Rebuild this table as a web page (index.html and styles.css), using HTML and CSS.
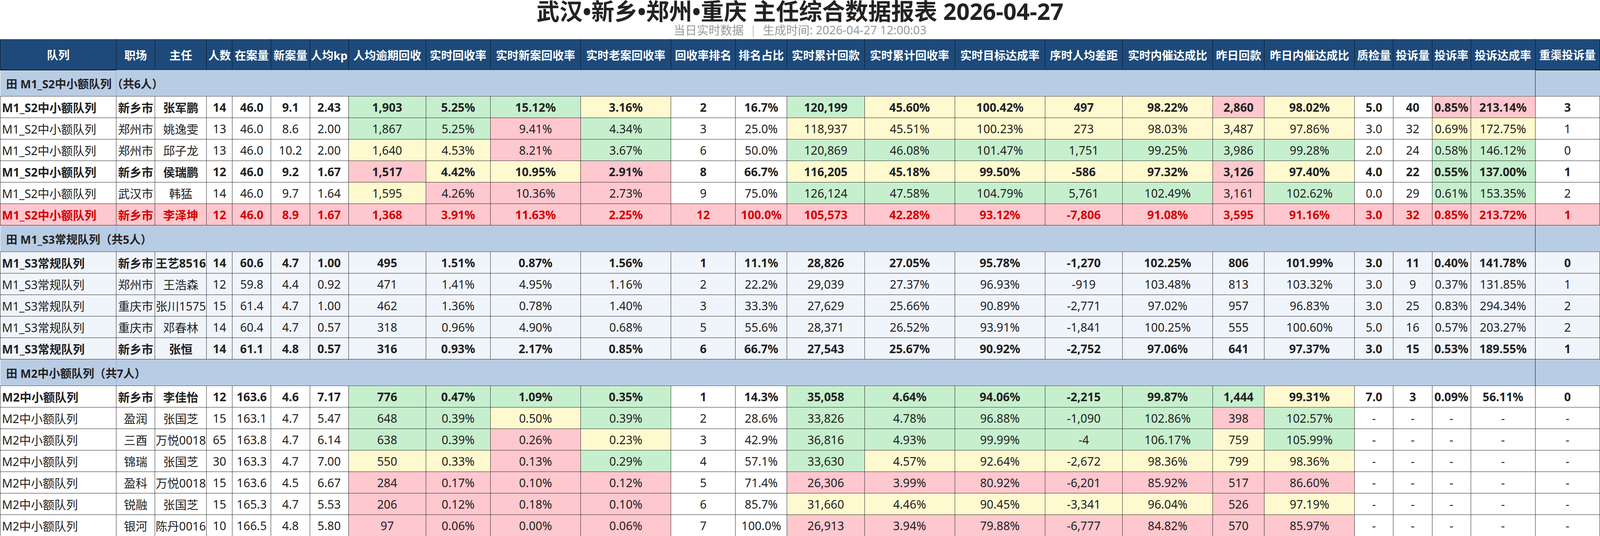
FILE: index.html
```html
<!DOCTYPE html>
<html lang="zh-CN">
<head>
<meta charset="utf-8">
<title>主任综合数据报表</title>
<link rel="stylesheet" href="styles.css">
</head>
<body>
<header class="head">
  <h1 class="title">武汉•新乡•郑州•重庆 主任综合数据报表 2026-04-27</h1>
  <div class="sub">当日实时数据<span class="sep">|</span>生成时间: 2026-04-27 12:00:03</div>
</header>
<table class="report">
  <colgroup>
    <col class="u9"><col class="u3"><col class="u4"><col class="u2"><col class="u3"><col class="u3"><col class="u3"><col class="u6"><col class="u5"><col class="u7"><col class="u7"><col class="u5"><col class="u4"><col class="u6"><col class="u7"><col class="u7"><col class="u6"><col class="u7"><col class="u4"><col class="u7"><col class="u3"><col class="u3"><col class="u3"><col class="u5"><col class="u5">
  </colgroup>
  <thead>
    <tr>
      <th class="sticky">队列</th><th>职场</th><th>主任</th><th>人数</th><th>在案量</th><th>新案量</th><th>人均kp</th><th>人均逾期回收</th><th>实时回收率</th><th>实时新案回收率</th><th>实时老案回收率</th><th>回收率排名</th><th>排名占比</th><th>实时累计回款</th><th>实时累计回收率</th><th>实时目标达成率</th><th>序时人均差距</th><th>实时内催达成比</th><th>昨日回款</th><th>昨日内催达成比</th><th>质检量</th><th>投诉量</th><th>投诉率</th><th>投诉达成率</th><th class="sticky">重渠投诉量</th>
    </tr>
  </thead>
  <tbody>
    <tr class="grp"><td class="gname">田 M1_S2中小额队列（共6人）</td><td colspan="23"></td><td class="glast"></td></tr>
    <tr class="b"><td class="q">M1_S2中小额队列</td><td>新乡市</td><td>张军鹏</td><td>14</td><td>46.0</td><td>9.1</td><td>2.43</td><td class="g">1,903</td><td class="g">5.25%</td><td class="g">15.12%</td><td class="y">3.16%</td><td>2</td><td>16.7%</td><td class="g">120,199</td><td class="y">45.60%</td><td class="y">100.42%</td><td class="y">497</td><td class="y">98.22%</td><td class="p">2,860</td><td class="y">98.02%</td><td>5.0</td><td>40</td><td class="p">0.85%</td><td class="p">213.14%</td><td>3</td></tr>
    <tr><td class="q">M1_S2中小额队列</td><td>郑州市</td><td>姚逸雯</td><td>13</td><td>46.0</td><td>8.6</td><td>2.00</td><td class="g">1,867</td><td class="g">5.25%</td><td class="p">9.41%</td><td class="g">4.34%</td><td>3</td><td>25.0%</td><td class="y">118,937</td><td class="y">45.51%</td><td class="y">100.23%</td><td class="y">273</td><td class="y">98.03%</td><td class="y">3,487</td><td class="y">97.86%</td><td>3.0</td><td>32</td><td class="y">0.69%</td><td class="y">172.75%</td><td>1</td></tr>
    <tr><td class="q">M1_S2中小额队列</td><td>郑州市</td><td>邱子龙</td><td>13</td><td>46.0</td><td>10.2</td><td>2.00</td><td class="y">1,640</td><td class="y">4.53%</td><td class="p">8.21%</td><td class="g">3.67%</td><td>6</td><td>50.0%</td><td class="g">120,869</td><td class="g">46.08%</td><td class="g">101.47%</td><td class="g">1,751</td><td class="g">99.25%</td><td class="g">3,986</td><td class="g">99.28%</td><td>2.0</td><td>24</td><td class="g">0.58%</td><td class="g">146.12%</td><td>0</td></tr>
    <tr class="b"><td class="q">M1_S2中小额队列</td><td>新乡市</td><td>侯瑞鹏</td><td>12</td><td>46.0</td><td>9.2</td><td>1.67</td><td class="p">1,517</td><td class="y">4.42%</td><td class="y">10.95%</td><td class="p">2.91%</td><td>8</td><td>66.7%</td><td class="y">116,205</td><td class="y">45.18%</td><td class="y">99.50%</td><td class="y">-586</td><td class="y">97.32%</td><td class="p">3,126</td><td class="y">97.40%</td><td>4.0</td><td>22</td><td class="g">0.55%</td><td class="g">137.00%</td><td>1</td></tr>
    <tr><td class="q">M1_S2中小额队列</td><td>武汉市</td><td>韩猛</td><td>14</td><td>46.0</td><td>9.7</td><td>1.64</td><td class="y">1,595</td><td class="p">4.26%</td><td class="p">10.36%</td><td class="p">2.73%</td><td>9</td><td>75.0%</td><td class="g">126,124</td><td class="g">47.58%</td><td class="g">104.79%</td><td class="g">5,761</td><td class="g">102.49%</td><td class="p">3,161</td><td class="g">102.62%</td><td>0.0</td><td>29</td><td class="g">0.61%</td><td class="g">153.35%</td><td>2</td></tr>
    <tr class="alert"><td class="q">M1_S2中小额队列</td><td>新乡市</td><td>李泽坤</td><td>12</td><td>46.0</td><td>8.9</td><td>1.67</td><td>1,368</td><td>3.91%</td><td>11.63%</td><td>2.25%</td><td>12</td><td>100.0%</td><td>105,573</td><td>42.28%</td><td>93.12%</td><td>-7,806</td><td>91.08%</td><td>3,595</td><td>91.16%</td><td>3.0</td><td>32</td><td>0.85%</td><td>213.72%</td><td>1</td></tr>

    <tr class="grp"><td class="gname">田 M1_S3常规队列（共5人）</td><td colspan="23"></td><td class="glast"></td></tr>
    <tr class="alt b"><td class="q">M1_S3常规队列</td><td>新乡市</td><td>王艺8516</td><td>14</td><td>60.6</td><td>4.7</td><td>1.00</td><td class="g">495</td><td class="g">1.51%</td><td class="p">0.87%</td><td class="g">1.56%</td><td>1</td><td>11.1%</td><td class="g">28,826</td><td class="g">27.05%</td><td class="g">95.78%</td><td class="g">-1,270</td><td class="g">102.25%</td><td class="y">806</td><td class="g">101.99%</td><td>3.0</td><td>11</td><td class="g">0.40%</td><td class="g">141.78%</td><td>0</td></tr>
    <tr class="alt"><td class="q">M1_S3常规队列</td><td>郑州市</td><td>王浩森</td><td>12</td><td>59.8</td><td>4.4</td><td>0.92</td><td class="g">471</td><td class="g">1.41%</td><td class="g">4.95%</td><td class="y">1.16%</td><td>2</td><td>22.2%</td><td class="g">29,039</td><td class="g">27.37%</td><td class="g">96.93%</td><td class="g">-919</td><td class="g">103.48%</td><td class="y">813</td><td class="g">103.32%</td><td>3.0</td><td>9</td><td class="g">0.37%</td><td class="g">131.85%</td><td>1</td></tr>
    <tr class="alt"><td class="q">M1_S3常规队列</td><td>重庆市</td><td>张川1575</td><td>15</td><td>61.4</td><td>4.7</td><td>1.00</td><td class="g">462</td><td class="g">1.36%</td><td class="p">0.78%</td><td class="g">1.40%</td><td>3</td><td>33.3%</td><td class="p">27,629</td><td class="p">25.66%</td><td class="p">90.89%</td><td class="p">-2,771</td><td class="p">97.02%</td><td class="g">957</td><td class="p">96.83%</td><td>3.0</td><td>25</td><td class="p">0.83%</td><td class="p">294.34%</td><td>2</td></tr>
    <tr class="alt"><td class="q">M1_S3常规队列</td><td>重庆市</td><td>邓春林</td><td>14</td><td>60.4</td><td>4.7</td><td>0.57</td><td class="p">318</td><td class="p">0.96%</td><td class="g">4.90%</td><td class="p">0.68%</td><td>5</td><td>55.6%</td><td class="y">28,371</td><td class="y">26.52%</td><td class="y">93.91%</td><td class="y">-1,841</td><td class="y">100.25%</td><td class="p">555</td><td class="y">100.60%</td><td>5.0</td><td>16</td><td class="y">0.57%</td><td class="y">203.27%</td><td>2</td></tr>
    <tr class="alt b"><td class="q">M1_S3常规队列</td><td>新乡市</td><td>张恒</td><td>14</td><td>61.1</td><td>4.8</td><td>0.57</td><td class="p">316</td><td class="p">0.93%</td><td class="y">2.17%</td><td class="p">0.85%</td><td>6</td><td>66.7%</td><td class="p">27,543</td><td class="p">25.67%</td><td class="p">90.92%</td><td class="p">-2,752</td><td class="p">97.06%</td><td class="p">641</td><td class="p">97.37%</td><td>3.0</td><td>15</td><td class="y">0.53%</td><td class="y">189.55%</td><td>1</td></tr>

    <tr class="grp"><td class="gname">田 M2中小额队列（共7人）</td><td colspan="23"></td><td class="glast"></td></tr>
    <tr class="b"><td class="q">M2中小额队列</td><td>新乡市</td><td>李佳怡</td><td>12</td><td>163.6</td><td>4.6</td><td>7.17</td><td class="g">776</td><td class="g">0.47%</td><td class="g">1.09%</td><td class="g">0.35%</td><td>1</td><td>14.3%</td><td class="g">35,058</td><td class="g">4.64%</td><td class="g">94.06%</td><td class="g">-2,215</td><td class="g">99.87%</td><td class="g">1,444</td><td class="y">99.31%</td><td>7.0</td><td>3</td><td>0.09%</td><td>56.11%</td><td>0</td></tr>
    <tr><td class="q">M2中小额队列</td><td>盈润</td><td>张国芝</td><td>15</td><td>163.1</td><td>4.7</td><td>5.47</td><td class="g">648</td><td class="g">0.39%</td><td class="y">0.50%</td><td class="g">0.39%</td><td>2</td><td>28.6%</td><td class="g">33,826</td><td class="g">4.78%</td><td class="g">96.88%</td><td class="g">-1,090</td><td class="g">102.86%</td><td class="p">398</td><td class="g">102.57%</td><td>-</td><td>-</td><td>-</td><td>-</td><td>-</td></tr>
    <tr><td class="q">M2中小额队列</td><td>三酉</td><td>万悦0018</td><td>65</td><td>163.8</td><td>4.7</td><td>6.14</td><td class="g">638</td><td class="g">0.39%</td><td class="p">0.26%</td><td class="y">0.23%</td><td>3</td><td>42.9%</td><td class="g">36,816</td><td class="g">4.93%</td><td class="g">99.99%</td><td class="g">-4</td><td class="g">106.17%</td><td class="y">759</td><td class="g">105.99%</td><td>-</td><td>-</td><td>-</td><td>-</td><td>-</td></tr>
    <tr><td class="q">M2中小额队列</td><td>锦瑞</td><td>张国芝</td><td>30</td><td>163.3</td><td>4.7</td><td>7.00</td><td class="y">550</td><td class="y">0.33%</td><td class="p">0.13%</td><td class="g">0.29%</td><td>4</td><td>57.1%</td><td class="g">33,630</td><td class="y">4.57%</td><td class="y">92.64%</td><td class="y">-2,672</td><td class="y">98.36%</td><td class="y">799</td><td class="y">98.36%</td><td>-</td><td>-</td><td>-</td><td>-</td><td>-</td></tr>
    <tr><td class="q">M2中小额队列</td><td>盈科</td><td>万悦0018</td><td>15</td><td>163.6</td><td>4.5</td><td>6.67</td><td class="p">284</td><td class="p">0.17%</td><td class="p">0.10%</td><td class="p">0.12%</td><td>5</td><td>71.4%</td><td class="p">26,306</td><td class="p">3.99%</td><td class="p">80.92%</td><td class="p">-6,201</td><td class="p">85.92%</td><td class="p">517</td><td class="p">86.60%</td><td>-</td><td>-</td><td>-</td><td>-</td><td>-</td></tr>
    <tr><td class="q">M2中小额队列</td><td>锐融</td><td>张国芝</td><td>15</td><td>165.3</td><td>4.7</td><td>5.53</td><td class="p">206</td><td class="p">0.12%</td><td class="p">0.18%</td><td class="p">0.10%</td><td>6</td><td>85.7%</td><td class="y">31,660</td><td class="y">4.46%</td><td class="y">90.45%</td><td class="y">-3,341</td><td class="y">96.04%</td><td class="p">526</td><td class="y">97.19%</td><td>-</td><td>-</td><td>-</td><td>-</td><td>-</td></tr>
    <tr><td class="q">M2中小额队列</td><td>银河</td><td>陈丹0016</td><td>10</td><td>166.5</td><td>4.8</td><td>5.80</td><td class="p">97</td><td class="p">0.06%</td><td class="p">0.00%</td><td class="p">0.06%</td><td>7</td><td>100.0%</td><td class="p">26,913</td><td class="p">3.94%</td><td class="p">79.88%</td><td class="p">-6,777</td><td class="p">84.82%</td><td class="p">570</td><td class="p">85.97%</td><td>-</td><td>-</td><td>-</td><td>-</td><td>-</td></tr>
  </tbody>
</table>
</body>
</html>
```
FILE: styles.css
```css
* { box-sizing: border-box; }
html, body { margin: 0; padding: 0; background: #ffffff; }
body {
  font-family: "Noto Sans", "Noto Sans CJK SC", sans-serif;
  color: #222222;
}

.head {
  height: 100px;
  text-align: center;
}
.title {
  margin: 0;
  font-size: 59px;
  line-height: 56px;
  font-weight: 700;
  color: #222222;
  white-space: nowrap;
}
.sub {
  font-size: 30px;
  line-height: 41px;
  color: #9a9a9a;
  white-space: nowrap;
}
.sub .sep { margin: 0 16px; color: #c4c4c4; }

/* column widths: the sheet is laid out on a 124-unit grid */
.report {
  width: 100%;
  border-collapse: collapse;
  table-layout: fixed;
}
.report col.u2 { width: 1.6129%; }
.report col.u3 { width: 2.4194%; }
.report col.u4 { width: 3.2258%; }
.report col.u5 { width: 4.0323%; }
.report col.u6 { width: 4.8387%; }
.report col.u7 { width: 5.6452%; }
.report col.u9 { width: 7.2581%; }

.report thead tr { height: 78px; }
.report th {
  padding: 0;
  background: #1d4a7a;
  color: #ffffff;
  font-size: 29px;
  font-weight: 700;
  text-align: center;
  white-space: nowrap;
  border: 1px solid #111111;
  border-top-color: #6e6e6e;
}
.report th.sticky { border-bottom: 2px solid #111111; }

.report tbody tr { height: 55px; }
.report td {
  padding: 0;
  font-size: 30px;
  font-weight: 400;
  text-align: center;
  white-space: nowrap;
  background: #ffffff;
  border: 1px solid #2a2a2a;
}
.report td.q { text-align: left; padding-left: 4px; }

.report tr.b td { font-weight: 700; }
.report tr.alt td { background: #f0f4fb; }

.report td.g { background: #c6efce; }
.report td.y { background: #fff9cf; }
.report td.p { background: #ffc7ce; }

.report tr.alert td {
  background: #ffc7ce;
  color: #d40000;
  font-weight: 700;
}

.report tr.grp { height: 68px; }
.report tr.grp td {
  background: #b8cce4;
  border-left: none;
  border-right: none;
  border-top: 1px solid #4a4a4a;
  border-bottom: 1px solid #4a4a4a;
}
.report tr.grp td.gname {
  text-align: left;
  padding-left: 15px;
  font-size: 29px;
  font-weight: 700;
  color: #222222;
  overflow: visible;
  border-right: 1px solid #8ea5c3;
}
.report tr.grp td.glast { border-left: 1px solid #111111; }
```
